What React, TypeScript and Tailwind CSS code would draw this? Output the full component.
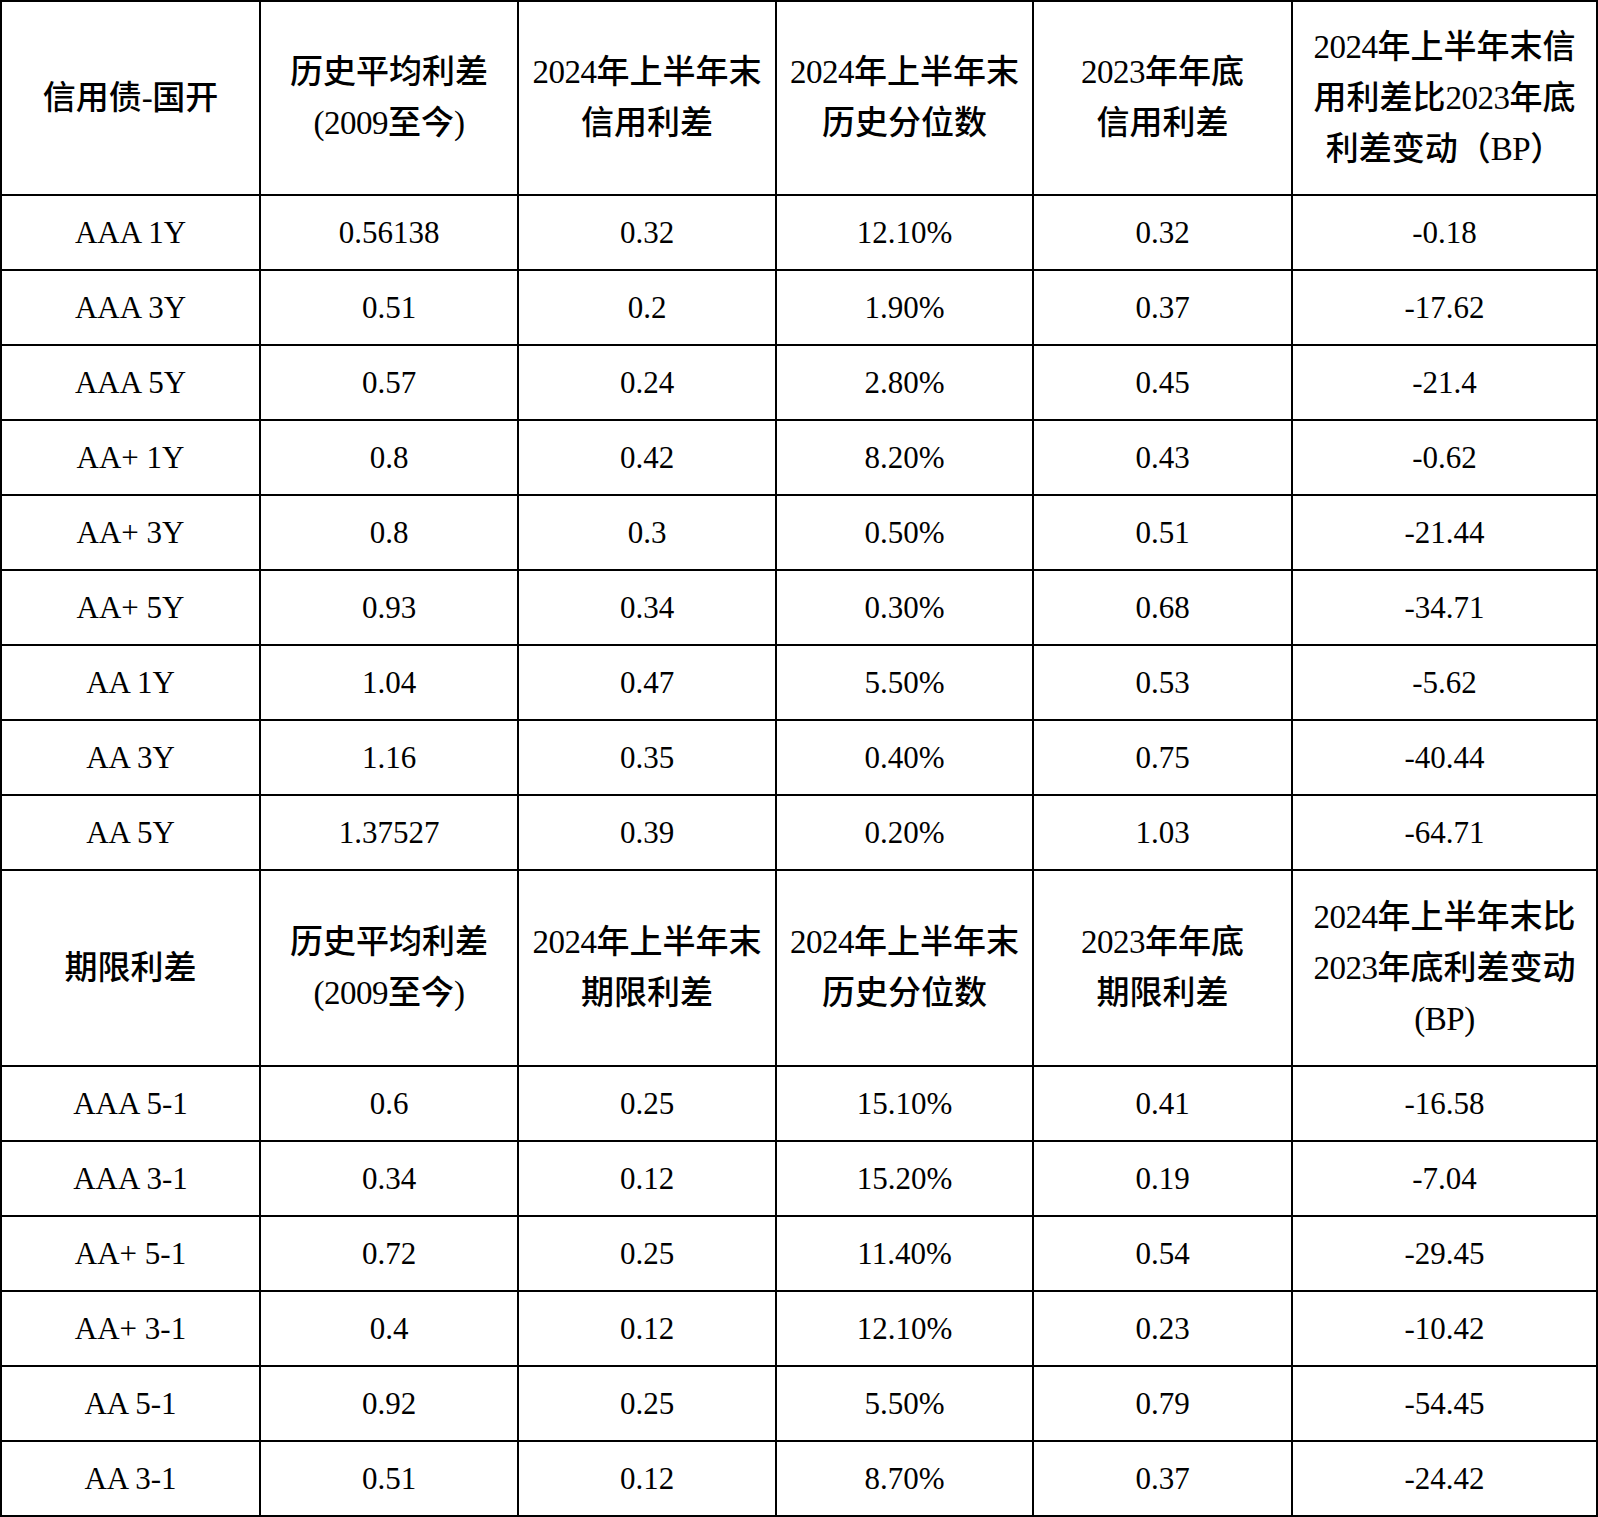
const FONT = "font-['Liberation_Serif','Noto_Sans_CJK_SC',serif]";

type Row = [string, string, string, string, string, string];

const creditRows: Row[] = [
  ["AAA 1Y", "0.56138", "0.32", "12.10%", "0.32", "-0.18"],
  ["AAA 3Y", "0.51", "0.2", "1.90%", "0.37", "-17.62"],
  ["AAA 5Y", "0.57", "0.24", "2.80%", "0.45", "-21.4"],
  ["AA+ 1Y", "0.8", "0.42", "8.20%", "0.43", "-0.62"],
  ["AA+ 3Y", "0.8", "0.3", "0.50%", "0.51", "-21.44"],
  ["AA+ 5Y", "0.93", "0.34", "0.30%", "0.68", "-34.71"],
  ["AA 1Y", "1.04", "0.47", "5.50%", "0.53", "-5.62"],
  ["AA 3Y", "1.16", "0.35", "0.40%", "0.75", "-40.44"],
  ["AA 5Y", "1.37527", "0.39", "0.20%", "1.03", "-64.71"],
];

const termRows: Row[] = [
  ["AAA 5-1", "0.6", "0.25", "15.10%", "0.41", "-16.58"],
  ["AAA 3-1", "0.34", "0.12", "15.20%", "0.19", "-7.04"],
  ["AA+ 5-1", "0.72", "0.25", "11.40%", "0.54", "-29.45"],
  ["AA+ 3-1", "0.4", "0.12", "12.10%", "0.23", "-10.42"],
  ["AA 5-1", "0.92", "0.25", "5.50%", "0.79", "-54.45"],
  ["AA 3-1", "0.51", "0.12", "8.70%", "0.37", "-24.42"],
];

const creditHeader: string[][] = [
  ["信用债-国开"],
  ["历史平均利差", "(2009至今)"],
  ["2024年上半年末", "信用利差"],
  ["2024年上半年末", "历史分位数"],
  ["2023年年底", "信用利差"],
  ["2024年上半年末信", "用利差比2023年底", "利差变动（BP）"],
];

const termHeader: string[][] = [
  ["期限利差"],
  ["历史平均利差", "(2009至今)"],
  ["2024年上半年末", "期限利差"],
  ["2024年上半年末", "历史分位数"],
  ["2023年年底", "期限利差"],
  ["2024年上半年末比", "2023年底利差变动", "(BP)"],
];

// split latin runs out so digits keep the serif face next to CJK
function MixedLine({ text }: Readonly<{ text: string }>) {
  const parts = text.split(/([\x20-\x7e]+)/).filter(Boolean);
  return (
    <div className="whitespace-nowrap">
      {parts.map((part, i) =>
        /^[\x20-\x7e]+$/.test(part) ? (
          <span
            className="font-['Liberation_Serif',serif] font-normal tracking-[-0.5px]"
            key={i}
          >
            {part}
          </span>
        ) : (
          <span key={i}>{part}</span>
        )
      )}
    </div>
  );
}

function HeaderRow({
  cells,
  first = false,
}: Readonly<{ cells: string[][]; first?: boolean }>) {
  return (
    <tr className={first ? "h-[194px]" : "h-[196px]"}>
      {cells.map((lines, i) => (
        <th
          className="border-r-2 border-b-2 border-black px-1 text-center align-middle text-[33px] font-medium leading-[51px] text-black"
          key={i}
        >
          {lines.map((line, j) => (
            <MixedLine key={j} text={line} />
          ))}
        </th>
      ))}
    </tr>
  );
}

function DataRow({ row }: Readonly<{ row: Row }>) {
  return (
    <tr className="h-[75px]">
      {row.map((cell, i) => (
        <td
          className="border-r-2 border-b-2 border-black text-center align-middle text-[31px] leading-none text-black"
          key={i}
        >
          {cell}
        </td>
      ))}
    </tr>
  );
}

export default function App() {
  return (
    <div className={`w-[1598px] bg-white ${FONT}`}>
      <table className="w-[1598px] table-fixed border-separate border-spacing-0 border-t-2 border-l-2 border-black">
        <colgroup>
          <col className="w-[259px]" />
          <col className="w-[258px]" />
          <col className="w-[258px]" />
          <col className="w-[257px]" />
          <col className="w-[259px]" />
          <col className="w-[305px]" />
        </colgroup>
        <tbody>
          <HeaderRow cells={creditHeader} first />
          {creditRows.map((row) => (
            <DataRow key={row[0]} row={row} />
          ))}
          <HeaderRow cells={termHeader} />
          {termRows.map((row) => (
            <DataRow key={row[0]} row={row} />
          ))}
        </tbody>
      </table>
    </div>
  );
}
